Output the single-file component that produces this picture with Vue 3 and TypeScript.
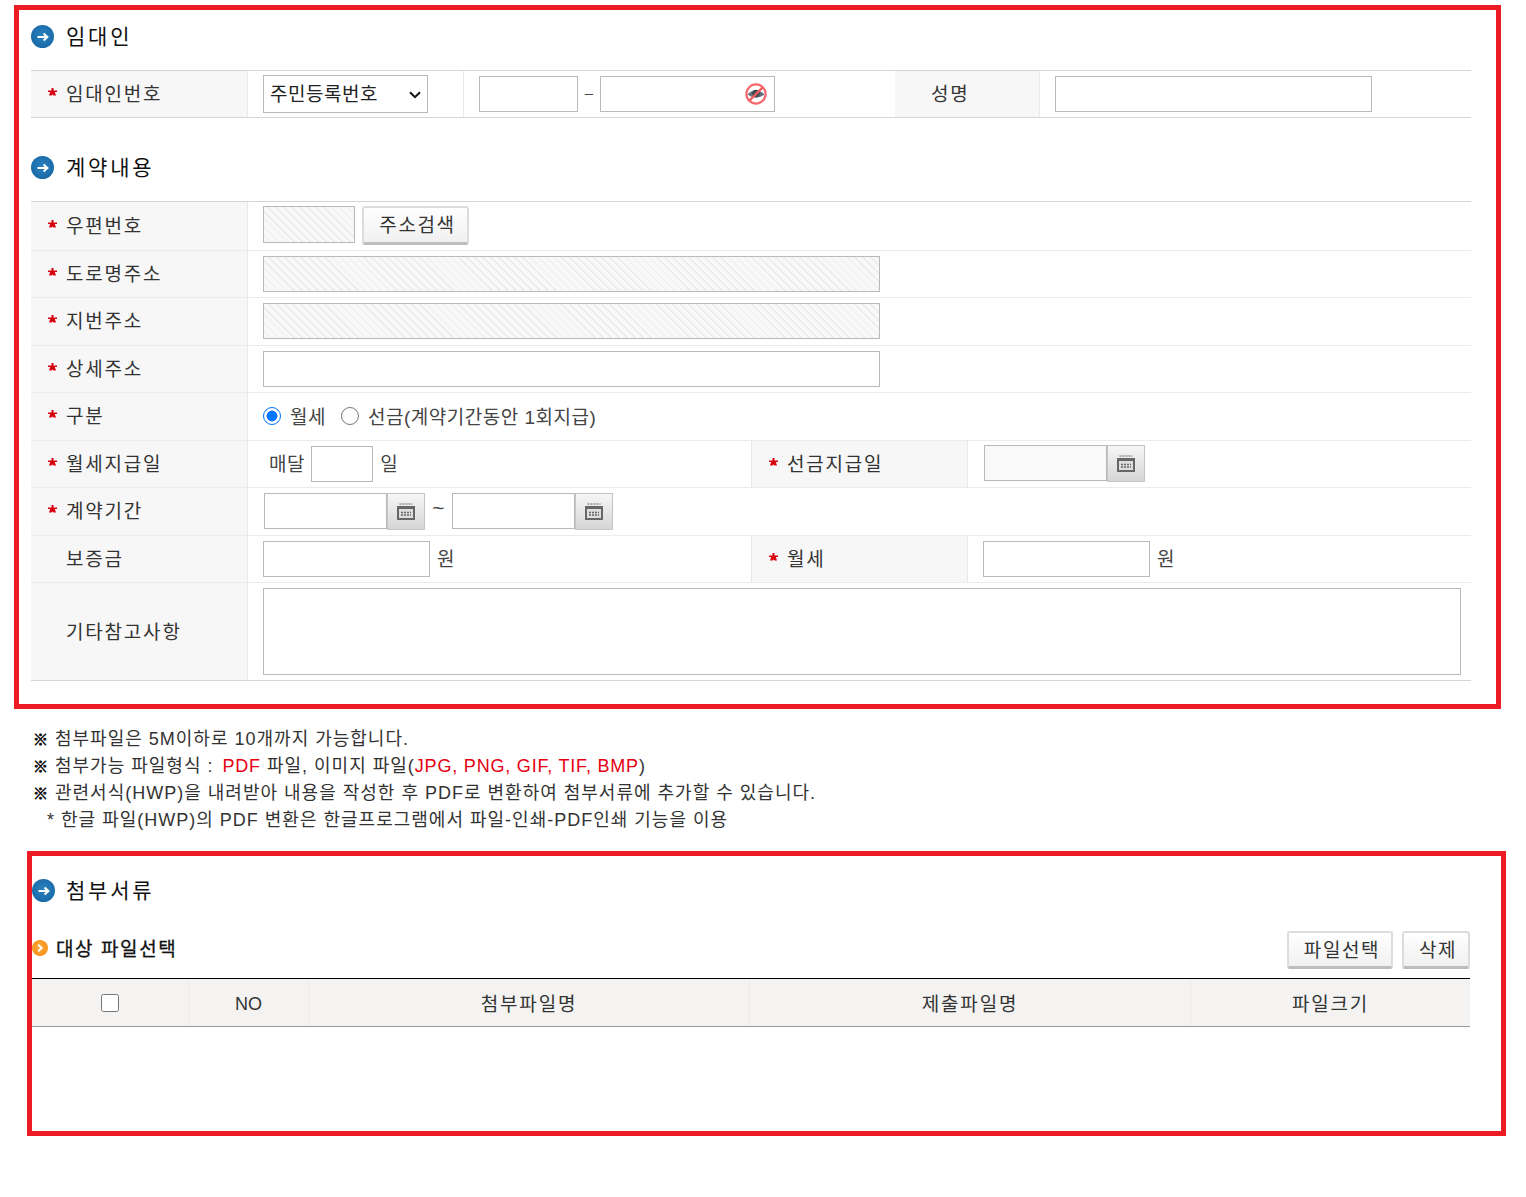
<script setup lang="ts">
const noteLines: string[] = [
  '첨부파일은 5M이하로 10개까지 가능합니다.',
  '관련서식(HWP)을 내려받아 내용을 작성한 후 PDF로 변환하여 첨부서류에 추가할 수 있습니다.',
]
</script>

<template>
  <div class="page">
    <section class="box box-one">
      <h2 class="head head-first"><span class="bullet"><svg viewBox="0 0 14 14" width="14" height="14"><path d="M1.5 7H11M7.6 3.4 11.4 7 7.6 10.6" fill="none" stroke="#fff" stroke-width="2"/></svg></span>임대인</h2>
      <div class="table">
        <div class="row row-person">
          <div class="label"><svg class="star" viewBox="0 0 9 8"><path d="M3.5 0h2v2.5H9V4H6.8L8 7.5H5.5l-1-1-1 1H1L2.2 4H0V2.5h3.5z"/></svg><span class="label-text">임대인번호</span></div>
          <div class="value value-type">
            <span class="select-wrap">
              <select class="select"><option>주민등록번호</option></select>
              <svg class="chevron" viewBox="0 0 12 8" width="12" height="8"><path d="M1 1.2 6 6.2 11 1.2" fill="none" stroke="#111" stroke-width="2"/></svg>
            </span>
          </div>
          <div class="value value-id">
            <input class="input w99" type="text" />
            <span class="dash">–</span>
            <span class="secret">
              <input class="input w175" type="text" />
              <svg class="eye" viewBox="0 0 22 22"><circle cx="11" cy="11" r="9.6" fill="#fff" stroke="#f8686c" stroke-width="2.2"/><path d="M2.5 11.5Q11 2.5 19.5 11.5 11 18 2.5 11.5Z" fill="#63717e"/><circle cx="11" cy="10.5" r="3.8" fill="#3f4c58"/><path d="M4.4 17.6 17.6 4.4" stroke="#f25b5b" stroke-width="2.2"/></svg>
            </span>
          </div>
          <div class="label label-name"><span class="label-text">성명</span></div>
          <div class="value value-grow"><input class="input w317" type="text" /></div>
        </div>
      </div>

      <h2 class="head head-second"><span class="bullet"><svg viewBox="0 0 14 14" width="14" height="14"><path d="M1.5 7H11M7.6 3.4 11.4 7 7.6 10.6" fill="none" stroke="#fff" stroke-width="2"/></svg></span>계약내용</h2>
      <div class="table">
        <div class="row row-zip">
          <div class="label"><svg class="star" viewBox="0 0 9 8"><path d="M3.5 0h2v2.5H9V4H6.8L8 7.5H5.5l-1-1-1 1H1L2.2 4H0V2.5h3.5z"/></svg><span class="label-text">우편번호</span></div>
          <div class="value value-grow">
            <input class="input hatch w92" type="text" readonly />
            <button class="btn btn-addr" type="button">주소검색</button>
          </div>
        </div>
        <div class="row">
          <div class="label"><svg class="star" viewBox="0 0 9 8"><path d="M3.5 0h2v2.5H9V4H6.8L8 7.5H5.5l-1-1-1 1H1L2.2 4H0V2.5h3.5z"/></svg><span class="label-text">도로명주소</span></div>
          <div class="value value-grow"><input class="input hatch w617" type="text" readonly /></div>
        </div>
        <div class="row">
          <div class="label"><svg class="star" viewBox="0 0 9 8"><path d="M3.5 0h2v2.5H9V4H6.8L8 7.5H5.5l-1-1-1 1H1L2.2 4H0V2.5h3.5z"/></svg><span class="label-text">지번주소</span></div>
          <div class="value value-grow"><input class="input hatch w617" type="text" readonly /></div>
        </div>
        <div class="row">
          <div class="label"><svg class="star" viewBox="0 0 9 8"><path d="M3.5 0h2v2.5H9V4H6.8L8 7.5H5.5l-1-1-1 1H1L2.2 4H0V2.5h3.5z"/></svg><span class="label-text">상세주소</span></div>
          <div class="value value-grow"><input class="input w617" type="text" /></div>
        </div>
        <div class="row">
          <div class="label"><svg class="star" viewBox="0 0 9 8"><path d="M3.5 0h2v2.5H9V4H6.8L8 7.5H5.5l-1-1-1 1H1L2.2 4H0V2.5h3.5z"/></svg><span class="label-text">구분</span></div>
          <div class="value value-grow text-thin">
            <input class="radio" type="radio" name="kind" checked />
            <span class="radio-text">월세</span>
            <input class="radio radio-second" type="radio" name="kind" />
            <span class="radio-text">선금(계약기간동안 1회지급)</span>
          </div>
        </div>
        <div class="row">
          <div class="label"><svg class="star" viewBox="0 0 9 8"><path d="M3.5 0h2v2.5H9V4H6.8L8 7.5H5.5l-1-1-1 1H1L2.2 4H0V2.5h3.5z"/></svg><span class="label-text">월세지급일</span></div>
          <div class="value value-half text-thin">
            <span class="month-label label-text">매달</span>
            <input class="input w62" type="text" />
            <span class="unit label-text">일</span>
          </div>
          <div class="label label-mid"><svg class="star" viewBox="0 0 9 8"><path d="M3.5 0h2v2.5H9V4H6.8L8 7.5H5.5l-1-1-1 1H1L2.2 4H0V2.5h3.5z"/></svg><span class="label-text">선금지급일</span></div>
          <div class="value value-grow">
            <span class="date date-off">
              <input class="input date-input" type="text" readonly />
              <button class="cal" type="button"><svg viewBox="0 0 18 17" width="18" height="17"><path d="M2.5 1H15.5" stroke="#a8a8a8" stroke-width="2" stroke-dasharray="2 1"/><rect x="1" y="4" width="16" height="12" fill="#dedede" stroke="#666" stroke-width="2"/><rect x="0" y="3" width="18" height="3" fill="#666"/><path d="M4 9.5H14M4 12H14" stroke="#666" stroke-width="1.5" stroke-dasharray="2 1"/></svg></button>
            </span>
          </div>
        </div>
        <div class="row">
          <div class="label"><svg class="star" viewBox="0 0 9 8"><path d="M3.5 0h2v2.5H9V4H6.8L8 7.5H5.5l-1-1-1 1H1L2.2 4H0V2.5h3.5z"/></svg><span class="label-text">계약기간</span></div>
          <div class="value value-grow text-thin value-period">
            <span class="date">
              <input class="input date-input" type="text" />
              <button class="cal" type="button"><svg viewBox="0 0 18 17" width="18" height="17"><path d="M2.5 1H15.5" stroke="#a8a8a8" stroke-width="2" stroke-dasharray="2 1"/><rect x="1" y="4" width="16" height="12" fill="#dedede" stroke="#666" stroke-width="2"/><rect x="0" y="3" width="18" height="3" fill="#666"/><path d="M4 9.5H14M4 12H14" stroke="#666" stroke-width="1.5" stroke-dasharray="2 1"/></svg></button>
            </span>
            <span class="tilde">~</span>
            <span class="date">
              <input class="input date-input" type="text" />
              <button class="cal" type="button"><svg viewBox="0 0 18 17" width="18" height="17"><path d="M2.5 1H15.5" stroke="#a8a8a8" stroke-width="2" stroke-dasharray="2 1"/><rect x="1" y="4" width="16" height="12" fill="#dedede" stroke="#666" stroke-width="2"/><rect x="0" y="3" width="18" height="3" fill="#666"/><path d="M4 9.5H14M4 12H14" stroke="#666" stroke-width="1.5" stroke-dasharray="2 1"/></svg></button>
            </span>
          </div>
        </div>
        <div class="row">
          <div class="label label-plain"><span class="label-text">보증금</span></div>
          <div class="value value-half text-thin">
            <input class="input w167" type="text" />
            <span class="unit label-text">원</span>
          </div>
          <div class="label label-mid"><svg class="star" viewBox="0 0 9 8"><path d="M3.5 0h2v2.5H9V4H6.8L8 7.5H5.5l-1-1-1 1H1L2.2 4H0V2.5h3.5z"/></svg><span class="label-text">월세</span></div>
          <div class="value value-grow text-thin">
            <input class="input w167" type="text" />
            <span class="unit label-text">원</span>
          </div>
        </div>
        <div class="row row-note">
          <div class="label label-plain"><span class="label-text">기타참고사항</span></div>
          <div class="value value-grow"><textarea class="area"></textarea></div>
        </div>
      </div>
    </section>

    <div class="notes">
      <p><span class="mark">※</span>{{ noteLines[0] }}</p>
      <p><span class="mark">※</span>첨부가능 파일형식 : <em class="first-red">PDF</em> 파일, 이미지 파일(<em>JPG, PNG, GIF, TIF, BMP</em>)</p>
      <p><span class="mark">※</span>{{ noteLines[1] }}</p>
      <p class="sub-note">* 한글 파일(HWP)의 PDF 변환은 한글프로그램에서 파일-인쇄-PDF인쇄 기능을 이용</p>
    </div>

    <section class="box box-two">
      <h2 class="head head-attach"><span class="bullet"><svg viewBox="0 0 14 14" width="14" height="14"><path d="M1.5 7H11M7.6 3.4 11.4 7 7.6 10.6" fill="none" stroke="#fff" stroke-width="2"/></svg></span>첨부서류</h2>
      <div class="sub-row">
        <h3 class="sub-head"><span class="bullet-orange"><svg viewBox="0 0 10 10" width="10" height="10"><path d="M3.2 1.6 6.6 5 3.2 8.4" fill="none" stroke="#fff" stroke-width="2"/></svg></span>대상 파일선택</h3>
        <div class="actions">
          <button class="btn btn-file" type="button">파일선택</button>
          <button class="btn btn-del" type="button">삭제</button>
        </div>
      </div>
      <div class="file-head">
        <div class="fh"><input class="check" type="checkbox" /></div>
        <div class="fh fh-no">NO</div>
        <div class="fh">첨부파일명</div>
        <div class="fh">제출파일명</div>
        <div class="fh">파일크기</div>
      </div>
    </section>
  </div>
</template>

<style scoped>
.page {
  width: 1526px;
  min-height: 1197px;
  box-sizing: border-box;
  padding-top: 5px;
  background: #fff;
  color: #333;
  font-family: "Liberation Sans", "Noto Sans CJK KR", sans-serif;
  font-size: 19px;
  letter-spacing: 1.8px;
}
.box {
  box-sizing: border-box;
  border: 5px solid #ed1c24;
}
.box-one {
  width: 1487px;
  height: 704px;
  margin-left: 14px;
  padding: 0 25px 0 12px;
}
.head {
  display: flex;
  align-items: flex-start;
  margin: 0;
  box-sizing: border-box;
  color: #111;
  font-size: 21px;
  line-height: 23px;
  font-weight: 400;
  letter-spacing: 2.8px;
}
.head-first { height: 60px; padding-top: 15px; }
.head-second { height: 83px; padding-top: 38px; }
.head-attach { height: 75px; padding-top: 23px; }
.head-attach .bullet { margin-right: 11px; }
.bullet {
  display: flex;
  align-items: center;
  justify-content: center;
  width: 23px;
  height: 23px;
  margin-right: 12px;
  border-radius: 50%;
  background: radial-gradient(circle at 50% 45%, #2a83c0 0, #1a6ba8 70%, #1c5f94 100%);
  flex: none;
}
.table {
  border-top: 1px solid #d5d5d5;
}
.row {
  display: flex;
  box-sizing: border-box;
  height: 47.5px;
  border-bottom: 1px solid #ebebeb;
}
.row-person {
  height: 47px;
  border-bottom-color: #d5d5d5;
}
.row-zip { height: 48.5px; }
.row-note {
  height: 98px;
  border-bottom-color: #d5d5d5;
}
.label {
  display: flex;
  align-items: center;
  box-sizing: border-box;
  flex: none;
  width: 217px;
  padding-left: 17px;
  background: #f7f7f7;
  border-right: 1px solid #e8e8e8;
  color: #333;
}
.label-text {
  position: relative;
  top: -1.5px;
}
.label-plain { padding-left: 35px; }
.label-name {
  width: 145px;
  padding-left: 36px;
}
.label-mid {
  width: 217px;
  border-left: 1px solid #e8e8e8;
}
.star {
  width: 9px;
  height: 8px;
  margin-right: 9px;
  margin-bottom: 4px;
  fill: #d8000f;
  flex: none;
}
.value {
  display: flex;
  align-items: center;
  box-sizing: border-box;
  padding-left: 15px;
}
.value-type {
  width: 216px;
  border-right: 1px solid #e8e8e8;
}
.value-id { width: 431px; }
.value-grow { flex: 1; }
.value-half { width: 503px; }
.value-period { padding-left: 16px; }
.text-thin { color: #444; }
.select-wrap {
  position: relative;
  display: flex;
}
.select {
  box-sizing: border-box;
  width: 165px;
  height: 38px;
  padding-left: 6px;
  border: 1px solid #b9b9b9;
  border-radius: 0;
  background: #fff;
  color: #222;
  font: inherit;
  letter-spacing: 0.5px;
  appearance: none;
}
.chevron {
  position: absolute;
  top: 16px;
  right: 7px;
  pointer-events: none;
}
.input {
  box-sizing: border-box;
  height: 36px;
  padding: 0 4px;
  border: 1px solid #b9b9b9;
  border-radius: 0;
  outline: none;
  background: #fff;
  font: inherit;
}
.w62 { width: 62px; }
.w92 { width: 92px; height: 37px; margin-bottom: 3px; }
.w99 { width: 99px; }
.w167 { width: 167px; }
.w175 { width: 175px; }
.w317 { width: 317px; }
.w617 { width: 617px; }
.hatch {
  background: repeating-linear-gradient(45deg, #f8f8f8 0, #f8f8f8 4.4px, #ebebeb 4.4px, #ebebeb 5.6px);
}
.dash {
  position: relative;
  top: -2px;
  width: 22px;
  text-align: center;
  color: #444;
  letter-spacing: 0;
  font-size: 15px;
}
.secret {
  position: relative;
  display: flex;
}
.eye {
  position: absolute;
  top: 7px;
  right: 8px;
  width: 22px;
  height: 22px;
  filter: blur(0.5px);
}
.btn {
  box-sizing: border-box;
  height: 38px;
  padding: 0 0 3px 4px;
  border: 2px solid #dcdcdc;
  border-bottom: 3px solid #bdbdbd;
  border-radius: 3px;
  background: linear-gradient(#fff, #f0f0f0);
  color: #333;
  font: inherit;
  letter-spacing: 1.6px;
}
.btn-addr {
  width: 107px;
  height: 39px;
  margin-left: 7px;
  margin-bottom: 1px;
}
.radio {
  width: 18px;
  height: 18px;
  margin: 0;
  flex: none;
}
.radio-text {
  position: relative;
  top: -1px;
  margin-left: 9px;
  letter-spacing: 0.5px;
}
.radio-second { margin-left: 15px; }
.month-label {
  margin: 0 6px 0 6px;
  letter-spacing: 0.6px;
}
.unit { margin-left: 7px; letter-spacing: 0; }
.date {
  display: inline-flex;
}
.date-off { margin-left: 1px; }
.date-input {
  width: 123px;
  height: 36px;
}
.date-off .date-input { background: #f9f9f9; }
.cal {
  display: flex;
  align-items: center;
  justify-content: center;
  box-sizing: border-box;
  width: 38px;
  height: 37px;
  padding: 0;
  border: 1px solid #c4c4c4;
  background: linear-gradient(#f6f6f6, #d6d6d6);
}
.tilde {
  position: relative;
  top: -3px;
  width: 27px;
  text-align: center;
  font-size: 21px;
  letter-spacing: 0;
}
.area {
  display: block;
  box-sizing: border-box;
  width: 1198px;
  height: 87px;
  border: 1px solid #b9b9b9;
  border-radius: 0;
  outline: none;
  resize: none;
}
.notes {
  box-sizing: border-box;
  height: 142px;
  padding: 17px 0 0 33px;
  color: #333;
  font-size: 18px;
  line-height: 27px;
  letter-spacing: 1px;
}
.notes p { margin: 0; }
.notes em {
  color: #e60012;
  font-style: normal;
  letter-spacing: 0.8px;
}
.notes .first-red { margin-left: 3px; }
.mark {
  display: inline-block;
  width: 22px;
  color: #111;
  font-size: 15px;
  font-weight: 700;
  letter-spacing: 0;
  -webkit-text-stroke: 0.7px #111;
}
.sub-note { padding-left: 14px; }
.box-two {
  width: 1479px;
  height: 285px;
  margin-left: 27px;
  padding-right: 31px;
}
.sub-row {
  display: flex;
  align-items: center;
  justify-content: space-between;
  height: 38px;
  margin-bottom: 9px;
}
.sub-head {
  display: flex;
  align-items: center;
  margin: 0;
  padding-bottom: 5px;
  color: #111;
  font-size: 19px;
  font-weight: 400;
  letter-spacing: 1.6px;
  -webkit-text-stroke: 0.3px #111;
}
.bullet-orange {
  display: flex;
  align-items: center;
  justify-content: center;
  width: 16px;
  height: 16px;
  margin-right: 8px;
  border-radius: 50%;
  background: radial-gradient(circle at 50% 45%, #f9a93a 0, #f7941d 70%, #f3a64b 100%);
}
.actions {
  display: flex;
  gap: 9px;
}
.btn-file { width: 106px; }
.btn-del { width: 68px; }
.file-head {
  display: grid;
  grid-template-columns: 156px 120px 441px 441px 280px;
  box-sizing: border-box;
  width: 1438px;
  height: 49px;
  border-top: 1px solid #000;
  border-bottom: 1px solid #999;
  background: #f4f3f1;
}
.fh {
  display: flex;
  align-items: center;
  justify-content: center;
  border-left: 1px solid #ebebe9;
  color: #333;
}
.fh:first-child { border-left: 0; }
.fh-no {
  padding-top: 3px;
  font-size: 18px;
  letter-spacing: 0;
}
.check {
  width: 18px;
  height: 18px;
  margin: 0;
}
</style>
